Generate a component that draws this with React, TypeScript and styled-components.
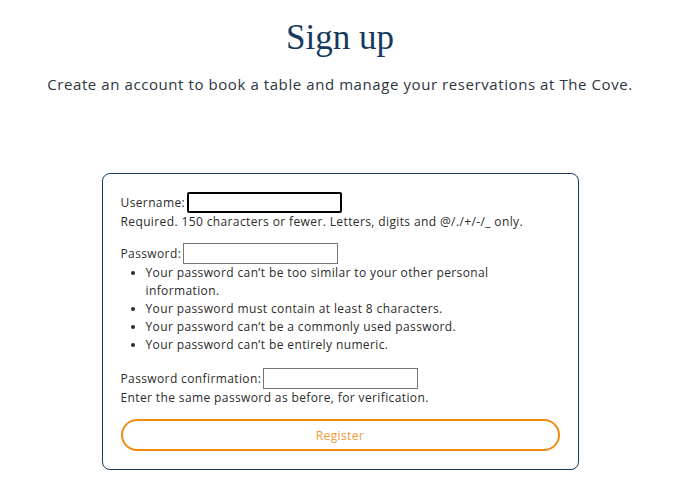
import React from "react";
import styled, { createGlobalStyle } from "styled-components";

const Global = createGlobalStyle`
  html, body { margin: 0; padding: 0; background: #ffffff; }
  body { font-family: "Open Sans", "DejaVu Sans", sans-serif; color: #2b2b2b; }
`;

const Page = styled.main`
  width: 680px;
  display: flex;
  flex-direction: column;
  align-items: center;
  padding-top: 16px;
`;

const Title = styled.h1`
  margin: 0;
  font-family: "Liberation Serif", "DejaVu Serif", serif;
  font-weight: 400;
  font-size: 35px;
  line-height: 44px;
  color: #163a5c;
`;

const Subtitle = styled.p`
  margin: 13px 0 0;
  font-size: 15px;
  line-height: 22px;
  color: #2d3540;
  letter-spacing: 0.58px;
`;

const Card = styled.form`
  margin-top: 78px;
  width: 477px;
  box-sizing: border-box;
  border: 1px solid #1c3a5e;
  border-radius: 8px;
  padding: 18px 18px 18px 18px;
  box-shadow: 0 2px 8px rgba(0, 0, 0, 0.06);
  font-size: 12px;
  letter-spacing: 0.38px;
  color: #2b2b2b;
  display: flex;
  flex-direction: column;
`;

const Row = styled.div<{ $mt?: number }>`
  display: flex;
  align-items: center;
  gap: 2px;
  height: 21px;
  margin-top: ${(p) => p.$mt ?? 0}px;
`;

const Label = styled.label`
  line-height: 18px;
  color: #2b2b2b;
`;

const Input = styled.input<{ $focus?: boolean }>`
  width: 155px;
  height: 21px;
  box-sizing: border-box;
  border: ${(p) => (p.$focus ? "2px solid #000" : "1px solid #767676")};
  border-radius: ${(p) => (p.$focus ? "2px" : "0")};
  padding: 0 3px;
  margin: 0;
  font: inherit;
  outline: none;
  background: #fff;
`;

const Help = styled.span`
  display: block;
  line-height: 18px;
`;

const List = styled.ul`
  margin: 0;
  padding-left: 25px;
  line-height: 18px;
  li { padding-right: 40px; }
`;

const Button = styled.button`
  margin-top: 12px;
  height: 32px;
  width: 100%;
  box-sizing: border-box;
  border: 2px solid #f28a10;
  border-radius: 16px;
  background: #fff;
  color: #f39a3a;
  font: inherit;
  font-size: 12px;
  letter-spacing: 0.38px;
  cursor: pointer;
`;

export default function App() {
  return (
    <>
      <Global />
      <Page>
        <Title>Sign up</Title>
        <Subtitle>Create an account to book a table and manage your reservations at The Cove.</Subtitle>
        <Card onSubmit={(e) => e.preventDefault()}>
          <Row>
            <Label htmlFor="u">Username:</Label>
            <Input id="u" $focus />
          </Row>
          <Help>Required. 150 characters or fewer. Letters, digits and @/./+/-/_ only.</Help>
          <Row $mt={12}>
            <Label htmlFor="p">Password:</Label>
            <Input id="p" type="password" />
          </Row>
          <List>
            <li>Your password can’t be too similar to your other personal information.</li>
            <li>Your password must contain at least 8 characters.</li>
            <li>Your password can’t be a commonly used password.</li>
            <li>Your password can’t be entirely numeric.</li>
          </List>
          <Row $mt={14}>
            <Label htmlFor="c">Password confirmation:</Label>
            <Input id="c" type="password" />
          </Row>
          <Help>Enter the same password as before, for verification.</Help>
          <Button type="submit">Register</Button>
        </Card>
      </Page>
    </>
  );
}
